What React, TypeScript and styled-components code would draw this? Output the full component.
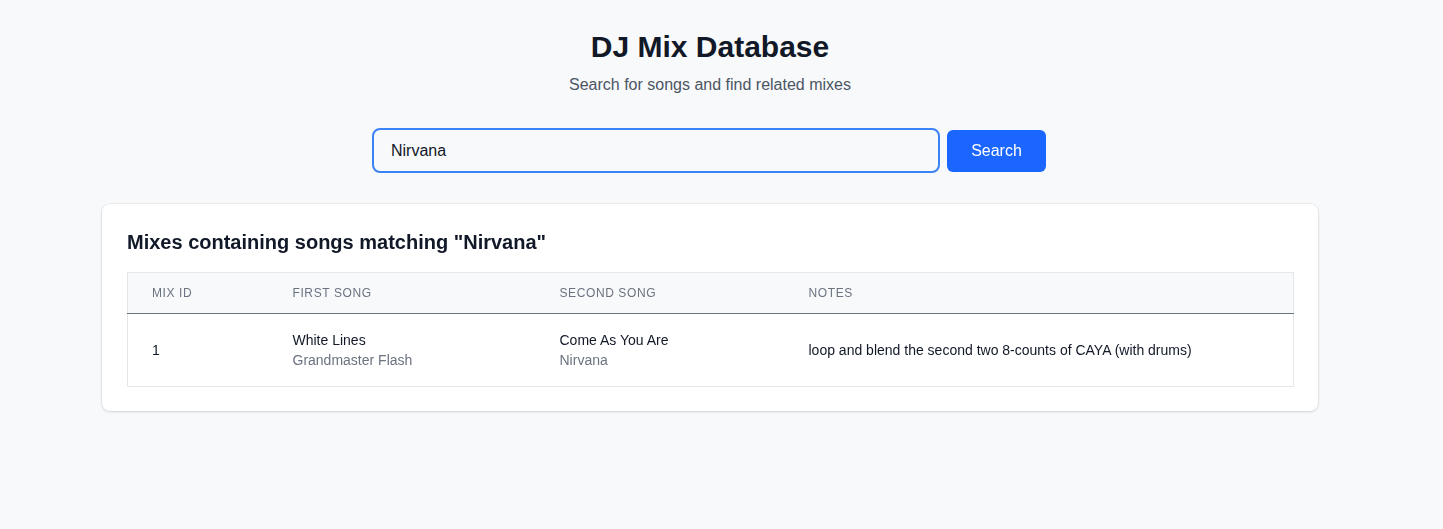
import React from "react";
import styled, { createGlobalStyle } from "styled-components";

const Global = createGlobalStyle`
  html, body { margin: 0; padding: 0; background: #f8f9fb; }
  body { font-family: "Liberation Sans", Arial, sans-serif; color: #111827; }
  * { box-sizing: border-box; }
`;

const Page = styled.div`
  padding: 28px 23px 40px 0;
`;

const Container = styled.div`
  max-width: 1216px;
  margin: 0 auto;
`;

const Header = styled.header`
  text-align: center;
`;

const Title = styled.h1`
  margin: 0;
  font-size: 30px;
  line-height: 38px;
  font-weight: 700;
  color: #111827;
`;

const Subtitle = styled.p`
  margin: 9px 0 0;
  font-size: 16px;
  line-height: 20px;
  color: #4b5563;
`;

const SearchRow = styled.form`
  display: flex;
  justify-content: center;
  align-items: center;
  gap: 7px;
  margin-top: 33px;
  padding-right: 2px;
`;

const Input = styled.input`
  width: 568px;
  height: 45px;
  border: 2px solid #3b82f6;
  border-radius: 8px;
  background: #f8f9fb;
  padding: 0 17px;
  font-family: inherit;
  font-size: 16px;
  color: #111827;
  caret-color: #111827;
  outline: none;
`;

const Button = styled.button`
  width: 99px;
  height: 42px;
  border: none;
  border-radius: 6px;
  background: #1a66ff;
  color: #ffffff;
  font-family: inherit;
  font-size: 16px;
  cursor: pointer;
`;

const Card = styled.section`
  margin-top: 31px;
  background: #ffffff;
  border-radius: 8px;
  box-shadow: 0 1px 3px rgba(0, 0, 0, 0.12), 0 0 0 1px rgba(0, 0, 0, 0.04);
  padding: 26px 24px 24px 25px;
`;

const CardTitle = styled.h2`
  margin: 0 0 18px;
  font-size: 20px;
  line-height: 24px;
  font-weight: 700;
  color: #111827;
`;

const Table = styled.table`
  width: 100%;
  table-layout: fixed;
  border-collapse: collapse;
  border: 1px solid #e5e7eb;
`;

const Th = styled.th<{ $w?: number }>`
  width: ${(p) => (p.$w ? `${p.$w}px` : "auto")};
  text-align: left;
  padding: 0 24px;
  height: 41px;
  background: #f8f9fb;
  font-size: 12px;
  font-weight: 400;
  letter-spacing: 0.6px;
  text-transform: uppercase;
  color: #6b7280;
  border-bottom: 1px solid #6b7280;
`;

const Td = styled.td`
  padding: 0 24px;
  height: 73px;
  font-size: 14px;
  color: #111827;
  vertical-align: middle;
`;

const SongTitle = styled.div`
  font-size: 14px;
  line-height: 20px;
  color: #111827;
`;

const Artist = styled.div`
  font-size: 14px;
  line-height: 20px;
  color: #6b7280;
`;

export default function App() {
  return (
    <>
      <Global />
      <Page>
        <Container>
          <Header>
            <Title>DJ Mix Database</Title>
            <Subtitle>Search for songs and find related mixes</Subtitle>
          </Header>
          <SearchRow onSubmit={(e) => e.preventDefault()}>
            <Input defaultValue="Nirvana" autoFocus />
            <Button type="submit">Search</Button>
          </SearchRow>
          <Card>
            <CardTitle>Mixes containing songs matching "Nirvana"</CardTitle>
            <Table>
              <thead>
                <tr>
                  <Th $w={141}>Mix ID</Th>
                  <Th $w={267}>First Song</Th>
                  <Th $w={249}>Second Song</Th>
                  <Th>Notes</Th>
                </tr>
              </thead>
              <tbody>
                <tr>
                  <Td>1</Td>
                  <Td>
                    <SongTitle>White Lines</SongTitle>
                    <Artist>Grandmaster Flash</Artist>
                  </Td>
                  <Td>
                    <SongTitle>Come As You Are</SongTitle>
                    <Artist>Nirvana</Artist>
                  </Td>
                  <Td>loop and blend the second two 8-counts of CAYA (with drums)</Td>
                </tr>
              </tbody>
            </Table>
          </Card>
        </Container>
      </Page>
    </>
  );
}
